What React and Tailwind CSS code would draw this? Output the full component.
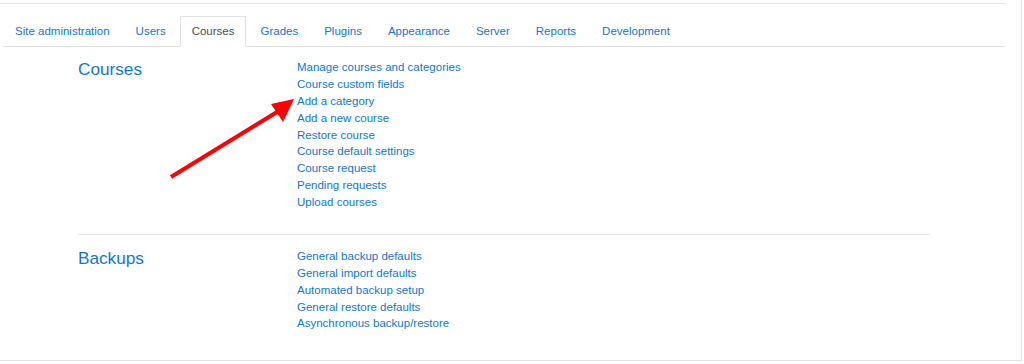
import React from "react";

const tabs = ["Site administration","Users","Courses","Grades","Plugins","Appearance","Server","Reports","Development"];

const courses = ["Manage courses and categories","Course custom fields","Add a category","Add a new course","Restore course","Course default settings","Course request","Pending requests","Upload courses"];
const backups = ["General backup defaults","General import defaults","Automated backup setup","General restore defaults","Asynchronous backup/restore"];

function Section({ title, links }) {
  return (
    <div className="flex">
      <div className="w-[219px] shrink-0">
        <h3 className="text-[17.2px] leading-[22px] text-[#1177d1] -mt-[1px]">{title}</h3>
      </div>
      <ul className="flex flex-col">
        {links.map((l) => (
          <li key={l} className="text-[11.5px] leading-[16.875px] text-[#1177d1]">{l}</li>
        ))}
      </ul>
    </div>
  );
}

export default function App() {
  return (
    <div className="relative w-[1024px] h-[364px] bg-white overflow-hidden" style={{ fontFamily: '"Liberation Sans", Arial, sans-serif' }}>
      <div className="w-[1022px] h-[361px] border-r border-b border-[#e3e3e3] flex flex-col">
        <div className="mt-[3px] w-[1005px] border-t border-[#e6e6e6]" />
        <ul className="mt-[12px] ml-[3px] w-[1002px] flex gap-[2px] border-b border-[#dee2e6] h-[31px]">
          {tabs.map((t) => (
            <li
              key={t}
              className={
                t === "Courses"
                  ? "px-[11px] h-[31px] flex items-center text-[11.5px] text-[#495057] bg-white border border-[#dee2e6] border-b-white -mb-px"
                  : "px-[11px] h-[30px] flex items-center text-[11.5px] text-[#1177d1] border border-transparent"
              }
            >
              <span className="mt-[1px]">{t}</span>
            </li>
          ))}
        </ul>
        <div className="ml-[78px] w-[852px]">
          <div className="pt-[12px] pb-[23px] border-b border-[#e5e5e5]">
            <Section title="Courses" links={courses} />
          </div>
          <div className="pt-[13px]">
            <Section title="Backups" links={backups} />
          </div>
        </div>
      </div>
      <svg className="absolute left-0 top-0 pointer-events-none" width="1024" height="364">
        <line x1="171" y1="177" x2="282" y2="109" stroke="#ff0000" strokeWidth="4" />
        <polygon points="294,99 271,104 283,122" fill="#ff0000" />
      </svg>
    </div>
  );
}
